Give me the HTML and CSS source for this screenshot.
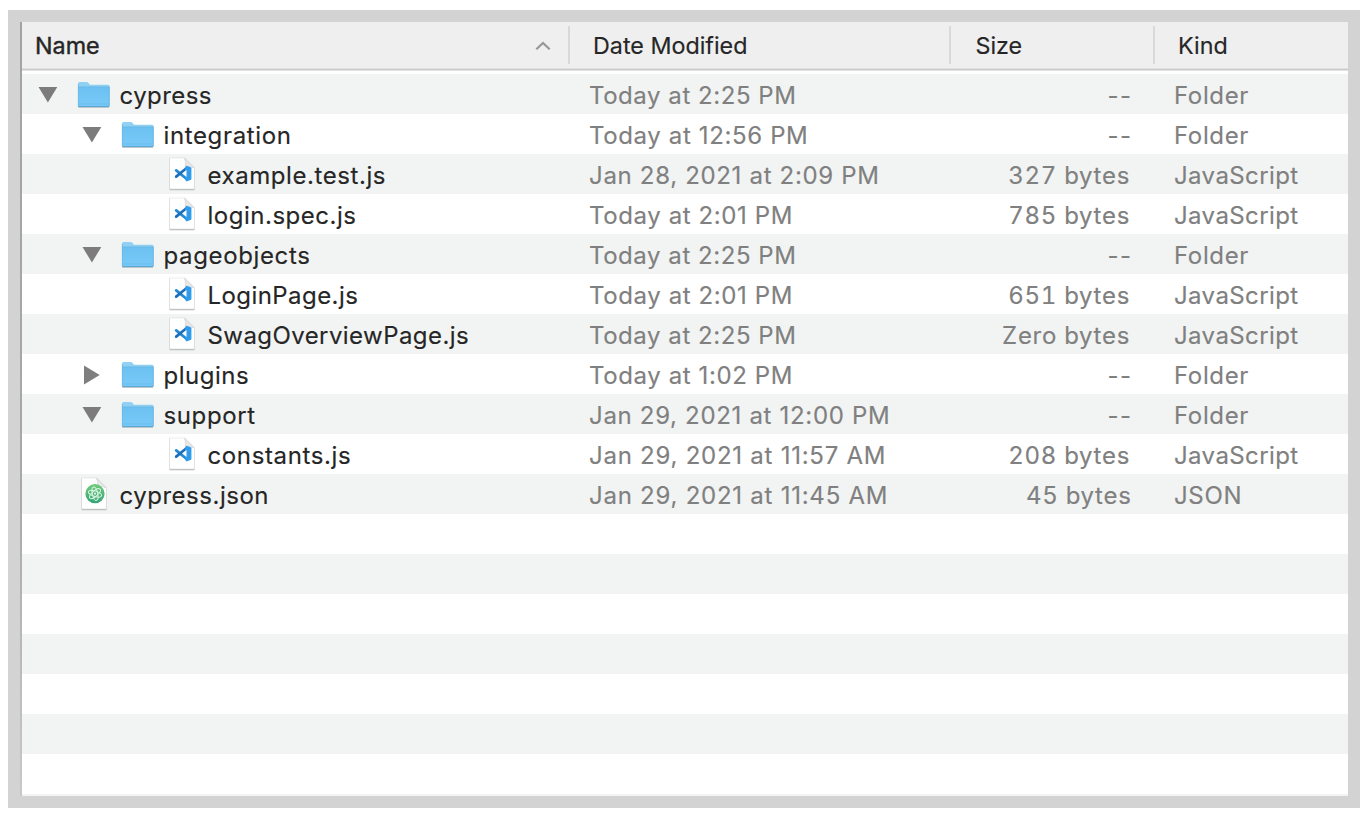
FILE: index.html
```
<!DOCTYPE html>
<html lang="en">
<head>
<meta charset="utf-8">
<title>cypress</title>
<link rel="stylesheet" href="styles.css">
</head>
<body>
<svg class="defs" width="0" height="0" aria-hidden="true">
  <defs>
    <linearGradient id="folder-fill" x1="0" y1="0" x2="0" y2="1">
      <stop offset="0" stop-color="#6bc1f2"/><stop offset="1" stop-color="#79caf8"/>
    </linearGradient>
    <linearGradient id="atom-fill" x1="0" y1="0" x2="0" y2="1">
      <stop offset="0" stop-color="#6fcb7c"/><stop offset="1" stop-color="#36a577"/>
    </linearGradient>
    <symbol id="folder" viewBox="0 0 34 28">
      <path d="M1 26.5V3.2Q1 1.5 2.7 1.5H9.5Q10.6 1.5 11.2 2.2L12.5 3.7Q13 4.2 14 4.2H31Q32.5 4.2 32.5 5.7V25Q32.5 27 31 27H2.5Q1 27 1 25.5Z" fill="#b5b9bb" opacity=".7"/>
      <path d="M1 25V2.7Q1 1 2.7 1H9.5Q10.6 1 11.2 1.7L12.5 3.2Q13 3.7 14 3.7H31Q32.5 3.7 32.5 5.2V24.6Q32.5 26 31 26H2.5Q1 26 1 24.5Z" fill="#8fd0f3"/>
      <path d="M1 6.3H32.5V24.6Q32.5 26 31 26H2.5Q1 26 1 24.6Z" fill="url(#folder-fill)"/>
      <path d="M1 6H32.5" stroke="#5fb4e4" stroke-width=".8"/>
      <path d="M1.3 25.6H32.2" stroke="#559fca" stroke-width=".9"/>
      <path d="M1.5 23H32" stroke="#65b6e5" stroke-width=".6"/>
      <path d="M1.3 3V25M32.2 6V25" stroke="#64b3df" stroke-width=".6"/>
    </symbol>
    <symbol id="sheet" viewBox="0 0 28 34">
      <path d="M2 1.6H16.5L26 11V32.6H2Z" fill="none" stroke="#c6c8c8" stroke-width="1.6" stroke-linejoin="round" opacity=".65"/>
      <path d="M2 1.3H16.5L26 10.8V31.7H2Z" fill="#fff"/>
      <path d="M1.8 32.4H26.2" stroke="#b5b7b7" stroke-width=".8"/>
      <path d="M16.5 1.3L26 10.8Q22 8.5 17.5 9.4Q18.3 4.5 16.5 1.3Z" fill="#e8e8e8" stroke="#cfcfcf" stroke-width=".6"/>
    </symbol>
    <symbol id="code" viewBox="0 0 28 34">
      <use href="#sheet"/>
      <path d="M8.2 13.4L18.8 21.8" stroke="#2489d3" stroke-width="2.8" stroke-linecap="round"/>
      <path d="M8.2 19.6L18.8 11" stroke="#1b70b8" stroke-width="2.8" stroke-linecap="round"/>
      <path d="M18.6 8.7L23.4 10.6V22.5L18.6 24.5L17.2 23.1V10.1Z" fill="#2f9bec"/>
      <path d="M18.5 13V20L14.3 16.5Z" fill="#fff"/>
    </symbol>
    <symbol id="json" viewBox="0 0 28 34">
      <use href="#sheet"/>
      <circle cx="15" cy="16.7" r="9.6" fill="url(#atom-fill)"/>
      <g fill="none" stroke="#def5e5" stroke-width="1">
        <ellipse cx="15" cy="16.7" rx="6.8" ry="2.7" transform="rotate(18 15 16.7)"/>
        <ellipse cx="15" cy="16.7" rx="6.8" ry="2.7" transform="rotate(78 15 16.7)"/>
        <ellipse cx="15" cy="16.7" rx="6.8" ry="2.7" transform="rotate(138 15 16.7)"/>
      </g>
      <circle cx="15" cy="16.7" r="1.1" fill="#def5e5"/>
    </symbol>
    <symbol id="open" viewBox="0 0 20 20"><path d="M.5 2H19.3L9.9 17.5Z" fill="#7b7c7b"/></symbol>
    <symbol id="closed" viewBox="0 0 20 20"><path d="M2 .6L17.7 10L2 19.4Z" fill="#7f7f7f"/></symbol>
  </defs>
</svg>
<main class="frame">
  <section class="list">
    <header class="head">
      <div class="col col-name"><span>Name</span><svg class="sort" viewBox="0 0 18 12"><path d="M2.3 9.3L9 3L15.7 9.3" fill="none" stroke="#979797" stroke-width="2.2"/></svg></div>
      <div class="col col-date">Date Modified</div>
      <div class="col col-size">Size</div>
      <div class="col col-kind">Kind</div>
    </header>
    <div class="rows">
      <div class="row"><div class="name"><svg class="arrow"><use href="#open"/></svg><svg class="folder"><use href="#folder"/></svg><span class="n1">cypress</span></div><span class="date d1">Today at 2:25 PM</span><span class="size dash">--</span><span class="kind">Folder</span></div>
      <div class="row"><div class="name level-1"><svg class="arrow"><use href="#open"/></svg><svg class="folder"><use href="#folder"/></svg><span class="n2">integration</span></div><span class="date d2">Today at 12:56 PM</span><span class="size dash">--</span><span class="kind">Folder</span></div>
      <div class="row"><div class="name level-2"><svg class="file"><use href="#code"/></svg><span class="n3">example.test.js</span></div><span class="date d3">Jan 28, 2021 at 2:09 PM</span><span class="size">327 bytes</span><span class="kind js">JavaScript</span></div>
      <div class="row"><div class="name level-2"><svg class="file"><use href="#code"/></svg><span class="n4">login.spec.js</span></div><span class="date d4">Today at 2:01 PM</span><span class="size">785 bytes</span><span class="kind js">JavaScript</span></div>
      <div class="row"><div class="name level-1"><svg class="arrow"><use href="#open"/></svg><svg class="folder"><use href="#folder"/></svg><span class="n2">pageobjects</span></div><span class="date d1">Today at 2:25 PM</span><span class="size dash">--</span><span class="kind">Folder</span></div>
      <div class="row"><div class="name level-2"><svg class="file"><use href="#code"/></svg><span class="n1">LoginPage.js</span></div><span class="date d4">Today at 2:01 PM</span><span class="size">651 bytes</span><span class="kind js">JavaScript</span></div>
      <div class="row"><div class="name level-2"><svg class="file"><use href="#code"/></svg><span class="n1">SwagOverviewPage.js</span></div><span class="date d1">Today at 2:25 PM</span><span class="size zero">Zero bytes</span><span class="kind js">JavaScript</span></div>
      <div class="row"><div class="name level-1"><svg class="arrow"><use href="#closed"/></svg><svg class="folder"><use href="#folder"/></svg><span class="n4">plugins</span></div><span class="date d4">Today at 1:02 PM</span><span class="size dash">--</span><span class="kind">Folder</span></div>
      <div class="row"><div class="name level-1"><svg class="arrow"><use href="#open"/></svg><svg class="folder"><use href="#folder"/></svg><span class="n2">support</span></div><span class="date d3">Jan 29, 2021 at 12:00 PM</span><span class="size dash">--</span><span class="kind">Folder</span></div>
      <div class="row"><div class="name level-2"><svg class="file"><use href="#code"/></svg><span class="n2">constants.js</span></div><span class="date d7">Jan 29, 2021 at 11:57 AM</span><span class="size">208 bytes</span><span class="kind js">JavaScript</span></div>
      <div class="row"><div class="name"><svg class="file"><use href="#json"/></svg><span class="n4">cypress.json</span></div><span class="date d7">Jan 29, 2021 at 11:45 AM</span><span class="size small">45 bytes</span><span class="kind">JSON</span></div>
      <div class="row"></div>
      <div class="row"></div>
      <div class="row"></div>
      <div class="row"></div>
      <div class="row"></div>
      <div class="row"></div>
      <div class="row"></div>
    </div>
  </section>
</main>
</body>
</html>
```
FILE: styles.css
```
* { box-sizing: border-box; }
body { margin: 0; background: #fff; font-family: Inter, "Liberation Sans", sans-serif; font-size: 24px; color: #262626; }
.defs { display: block; height: 0; }
.frame { width: 1352px; height: 798px; margin: 10px 8px 6px; padding: 12px; background: #d3d3d3; }
.list { display: flex; flex-direction: column; height: 774px; background: #fff; border: solid; border-width: 0 0 0 2px; border-image: linear-gradient(#a3a3a3, #a8a8a8 60%, #c8c8c8) 1; overflow: hidden; }
.head { display: grid; grid-template-columns: 548px 381px 204px 1fr; height: 49px; flex: none; padding: 4px 0 5px; background: linear-gradient(#efefef 46px, #e0e0e0 46px, #e0e0e0 47px, #c9c9c9 47px, #c9c9c9 48px, #e3e3e3 48px); font-size: 23.3px; }
.col { display: flex; align-items: center; height: 38px; padding-top: 1px; border-right: 2px solid #d9d9d9; line-height: 38px; -webkit-text-stroke: .15px; }
.col-name { padding-left: 13px; justify-content: space-between; -webkit-text-stroke: .4px #262626; }
.sort { width: 18px; height: 12px; margin-right: 16px; }
.col-date { padding-left: 23px; }
.col-size { padding-left: 24.5px; }
.col-kind { padding-left: 23px; border-right: 0; }
.rows { padding-top: 3px; height: 725px; border-bottom: 2px solid #f3f3f3; overflow: hidden; }
.row { display: grid; grid-template-columns: 567px 382px 159px 1fr; height: 40px; line-height: 43px; white-space: nowrap; color: #808080; -webkit-text-stroke: .15px; }
.row:nth-child(odd) { background: #f2f4f3; }
.name { display: flex; padding-left: 15.5px; color: #262626; }
.level-1 { padding-left: 59.5px; }
.level-2 { padding-left: 103.5px; }
.arrow { width: 20px; height: 20px; margin: 11px 19px 0 0; flex: none; }
.folder { width: 34px; height: 28px; margin: 7px 8.5px 0 .5px; flex: none; }
.file { width: 28px; height: 34px; margin: 3px 11.5px 0 42.5px; flex: none; }
.n1 { letter-spacing: .43px; }
.n2 { letter-spacing: .63px; }
.n3 { letter-spacing: .57px; }
.n4 { letter-spacing: .51px; }
.d1 { letter-spacing: .55px; }
.d2 { letter-spacing: .63px; }
.d3 { letter-spacing: .68px; }
.d4 { letter-spacing: .6px; }
.d7 { letter-spacing: .75px; }
.size { text-align: right; letter-spacing: .7px; font-variant-numeric: tabular-nums; }
.dash { margin-right: -2.5px; letter-spacing: 1.5px; font-variant-numeric: normal; }
.small { margin-right: -1.5px; }
.kind { padding-left: 44px; letter-spacing: .65px; }
.js { letter-spacing: .4px; }
```
